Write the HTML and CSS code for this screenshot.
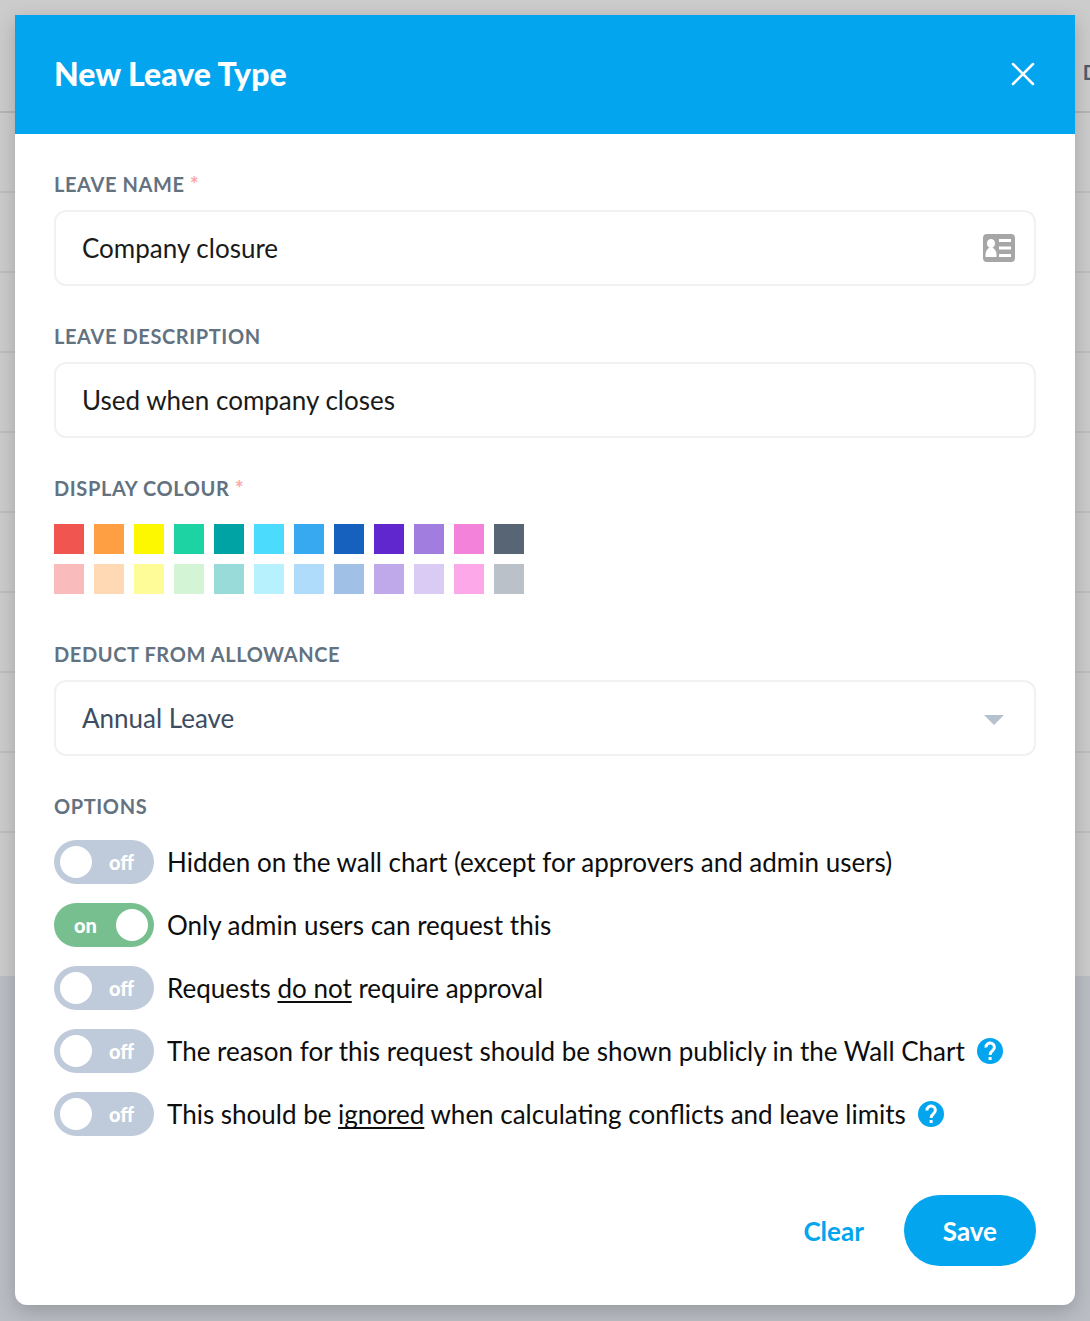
FILE: index.html
```
<!DOCTYPE html>
<html lang="en">
	<head>
		<meta charset="utf-8">
		<meta name="viewport" content="width=device-width, initial-scale=1">
		<title>New Leave Type</title>
		<link rel="stylesheet" href="styles.css">
	</head>
	<body>
		<div class="page">
			<div class="page-head">D</div>
			<div class="page-row"></div>
			<div class="page-row"></div>
			<div class="page-row"></div>
			<div class="page-row"></div>
			<div class="page-row"></div>
			<div class="page-row"></div>
			<div class="page-row"></div>
			<div class="page-row"></div>
			<div class="page-row"></div>
			<div class="page-foot"></div>
		</div>
		<div class="overlay">
			<form class="modal" role="dialog" aria-labelledby="modal-title">
				<header class="modal-header">
					<h1 class="modal-title" id="modal-title">New Leave Type</h1>
					<button class="close" type="button" aria-label="Close">
						<svg viewBox="0 0 24 24" width="24" height="24">
							<path d="M2 2L22 22M22 2L2 22" />
						</svg>
					</button>
				</header>
				<div class="modal-body">
					<div class="field">
						<label class="label" for="name">LEAVE NAME <span class="required">*</span></label>
						<div class="control">
							<input class="input" id="name" type="text" value="Company closure">
							<svg class="card-icon" viewBox="0 0 32 28" width="32" height="28">
								<rect width="32" height="28" rx="4" fill="#a6a6a6" />
								<ellipse cx="8" cy="9.5" rx="4" ry="4.5" fill="#fff" />
								<path d="M2.500 23V20Q3 15.500 6.500 13.500H9.500Q13 15.500 13.500 20V23Z" fill="#fff" />
								<path d="M16 5H28V8H16ZM16 12.500H28V15.500H16ZM16 20H28V23H16Z" fill="#fff" />
							</svg>
						</div>
					</div>
					<div class="field">
						<label class="label" for="description">LEAVE DESCRIPTION</label>
						<div class="control">
							<input class="input" id="description" type="text" value="Used when company closes">
						</div>
					</div>
					<div class="field field-colour" role="radiogroup" aria-labelledby="colour-label">
						<div class="label" id="colour-label">DISPLAY COLOUR <span class="required">*</span></div>
						<div class="swatches">
							<input class="swatch red" type="radio" name="colour" aria-label="Red">
							<input class="swatch orange" type="radio" name="colour" aria-label="Orange">
							<input class="swatch yellow" type="radio" name="colour" aria-label="Yellow">
							<input class="swatch green" type="radio" name="colour" aria-label="Green">
							<input class="swatch teal" type="radio" name="colour" aria-label="Teal">
							<input class="swatch cyan" type="radio" name="colour" aria-label="Cyan">
							<input class="swatch sky" type="radio" name="colour" aria-label="Sky">
							<input class="swatch blue" type="radio" name="colour" aria-label="Blue">
							<input class="swatch violet" type="radio" name="colour" aria-label="Violet">
							<input class="swatch lilac" type="radio" name="colour" aria-label="Lilac">
							<input class="swatch pink" type="radio" name="colour" aria-label="Pink">
							<input class="swatch slate" type="radio" name="colour" aria-label="Slate">
							<input class="swatch red-light" type="radio" name="colour" aria-label="Light red">
							<input class="swatch orange-light" type="radio" name="colour" aria-label="Light orange">
							<input class="swatch yellow-light" type="radio" name="colour" aria-label="Light yellow">
							<input class="swatch green-light" type="radio" name="colour" aria-label="Light green">
							<input class="swatch teal-light" type="radio" name="colour" aria-label="Light teal">
							<input class="swatch cyan-light" type="radio" name="colour" aria-label="Light cyan">
							<input class="swatch sky-light" type="radio" name="colour" aria-label="Light sky">
							<input class="swatch blue-light" type="radio" name="colour" aria-label="Light blue">
							<input class="swatch violet-light" type="radio" name="colour" aria-label="Light violet">
							<input class="swatch lilac-light" type="radio" name="colour" aria-label="Light lilac">
							<input class="swatch pink-light" type="radio" name="colour" aria-label="Light pink">
							<input class="swatch slate-light" type="radio" name="colour" aria-label="Light slate">
						</div>
					</div>
					<div class="field">
						<label class="label" for="allowance">DEDUCT FROM ALLOWANCE</label>
						<div class="control">
							<select class="input select" id="allowance">
								<option>Annual Leave</option>
							</select>
							<svg class="arrow" viewBox="0 0 20 10" width="20" height="10">
								<path d="M0 0H20L10 10Z" />
							</svg>
						</div>
					</div>
					<div class="field" role="group" aria-labelledby="options-label">
						<div class="label" id="options-label">OPTIONS</div>
						<div class="options">
							<div class="option">
								<input class="switch" id="hidden" type="checkbox">
								<label for="hidden">Hidden on the wall chart (except for approvers and admin users)</label>
							</div>
							<div class="option">
								<input class="switch" id="admin" type="checkbox" checked>
								<label for="admin">Only admin users can request this</label>
							</div>
							<div class="option">
								<input class="switch" id="approval" type="checkbox">
								<label for="approval">Requests <u>do not</u> require approval</label>
							</div>
							<div class="option">
								<input class="switch" id="public" type="checkbox">
								<label for="public">The reason for this request should be shown publicly in the Wall Chart</label>
								<button class="help" type="button" aria-label="Help">
									<svg viewBox="0 0 26 26" width="26" height="26">
										<circle cx="13" cy="13" r="13" />
										<path d="M9 9.500A4.200 4.200 0 1 1 15.700 12.500C14 13.800 13.100 14.500 13.100 17" />
										<path d="M13.100 19V22" />
									</svg>
								</button>
							</div>
							<div class="option">
								<input class="switch" id="ignored" type="checkbox">
								<label for="ignored">This should be <u>ignored</u> when calculating conflicts and leave limits</label>
								<button class="help" type="button" aria-label="Help">
									<svg viewBox="0 0 26 26" width="26" height="26">
										<circle cx="13" cy="13" r="13" />
										<path d="M9 9.500A4.200 4.200 0 1 1 15.700 12.500C14 13.800 13.100 14.500 13.100 17" />
										<path d="M13.100 19V22" />
									</svg>
								</button>
							</div>
						</div>
					</div>
				</div>
				<footer class="modal-footer">
					<button class="button" type="reset">Clear</button>
					<button class="button primary" type="submit">Save</button>
				</footer>
			</form>
		</div>
	</body>
</html>
```

FILE: styles.css
```
* {
	box-sizing: border-box;
}
body {
	margin: 0;
	min-height: 100vh;
	display: grid;
	background: #babec4;
	font-family: Lato, "Liberation Sans", sans-serif;
	font-size: 26px;
	line-height: 32px;
	color: #0d0d0d;
}
button,
input,
select {
	margin: 0;
	font: inherit;
}

/* table behind the dialog */
.page,
.overlay {
	grid-area: 1 / 1;
	min-width: 0;
}
.page {
	align-self: start;
	overflow: hidden;
	background: #ccc;
}
.page-head {
	height: 113px;
	padding-top: 56px;
	border-bottom: 2px solid #b5b5b5;
	text-align: right;
	font-size: 20px;
	font-weight: bold;
	color: #4f5d6b;
	margin-right: -8px;
}
.page-row {
	height: 80px;
	border-bottom: 2px solid #bfbfbf;
}
.page-foot {
	height: 143px;
}

.overlay {
	padding: 15px;
}
.modal {
	display: flex;
	flex-direction: column;
	border-radius: 0 0 12px 12px;
	background: #fff;
	box-shadow: 0 6px 20px rgba(0, 0, 0, 0.2);
}
.modal-header {
	display: flex;
	justify-content: space-between;
	align-items: center;
	height: 119px;
	padding: 0 40px 2px 39px;
	background: #03a5ee;
	color: #fff;
}
.modal-title {
	margin: 0;
	font-size: 32px;
	line-height: 40px;
	font-weight: 900;
}
.close {
	display: flex;
	padding: 0;
	border: none;
	background: none;
	cursor: pointer;
}
.close svg {
	fill: none;
	stroke: #fff;
	stroke-width: 2.5;
	stroke-linecap: round;
}
.modal-body {
	display: flex;
	flex-direction: column;
	gap: 38px;
	padding: 38px 39px 0;
}

.label {
	display: block;
	margin-bottom: 14px;
	font-size: 20px;
	line-height: 24px;
	font-weight: bold;
	letter-spacing: 0.03em;
	color: #637280;
}
.required {
	font-weight: 900;
	color: #fbaaa9;
}
.control {
	position: relative;
}
.input {
	display: block;
	width: 100%;
	height: 76px;
	padding: 0 26px;
	border: 2px solid #f1f1f1;
	border-radius: 12px;
	background: #fff;
	color: #1a1a1a;
}
.select {
	appearance: none;
	color: #3d4d5f;
}
.card-icon {
	position: absolute;
	top: 24px;
	right: 21px;
}
.arrow {
	position: absolute;
	top: 35px;
	right: 32px;
	fill: #b6c1ce;
	pointer-events: none;
}

.field-colour {
	padding-bottom: 10px;
}
.swatches {
	display: grid;
	grid-template-columns: repeat(12, 30px);
	gap: 10px;
	padding-top: 10px;
}
.swatch {
	appearance: none;
	width: 30px;
	height: 30px;
	cursor: pointer;
}
.red { background: #f05550; }
.orange { background: #ff9f43; }
.yellow { background: #fdf800; }
.green { background: #1dd3a4; }
.teal { background: #00a3a4; }
.cyan { background: #4bdcfd; }
.sky { background: #36a9f0; }
.blue { background: #1661be; }
.violet { background: #5f27cd; }
.lilac { background: #a17de0; }
.pink { background: #f383da; }
.slate { background: #576574; }
.red-light { background: #f9bbbb; }
.orange-light { background: #ffd9b4; }
.yellow-light { background: #fefc99; }
.green-light { background: #d4f5d5; }
.teal-light { background: #99dbd9; }
.cyan-light { background: #b7f1fe; }
.sky-light { background: #aedcfa; }
.blue-light { background: #a1c0e6; }
.violet-light { background: #bfa9ea; }
.lilac-light { background: #dacbf4; }
.pink-light { background: #fda8e8; }
.slate-light { background: #bbc1c8; }

.options {
	display: flex;
	flex-direction: column;
	gap: 19px;
	padding-top: 8px;
}
.option {
	display: flex;
	align-items: center;
	min-height: 44px;
}
.option u {
	text-decoration-thickness: 2px;
	text-underline-offset: 3px;
	text-decoration-skip-ink: none;
}
.switch {
	appearance: none;
	display: flex;
	flex: none;
	justify-content: space-between;
	align-items: center;
	width: 100px;
	height: 44px;
	margin-right: 13px;
	padding: 0 20px 0 6px;
	border-radius: 22px;
	background: #bfcbda;
	color: #fff;
	font-size: 20px;
	font-weight: 900;
	cursor: pointer;
}
.switch::before {
	content: "";
	width: 32px;
	height: 32px;
	border-radius: 50%;
	background: #fff;
}
.switch::after {
	content: "off";
}
.switch:checked {
	flex-direction: row-reverse;
	padding: 0 6px 0 20px;
	background: #78bf8f;
}
.switch:checked::after {
	content: "on";
}
.help {
	display: flex;
	flex: none;
	margin-left: 12px;
	padding: 0;
	border: none;
	background: none;
	cursor: pointer;
}
.help circle {
	fill: #03a5ee;
}
.help path {
	fill: none;
	stroke: #fff;
	stroke-width: 3;
}

.modal-footer {
	display: flex;
	justify-content: flex-end;
	align-items: center;
	padding: 59px 39px 39px;
}
.button {
	height: 71px;
	padding: 0 40px;
	border: none;
	border-radius: 36px;
	background: none;
	color: #03a5ee;
	font-weight: bold;
	cursor: pointer;
}
.primary {
	padding: 0 39px;
	background: #03a5ee;
	color: #fff;
}
```
